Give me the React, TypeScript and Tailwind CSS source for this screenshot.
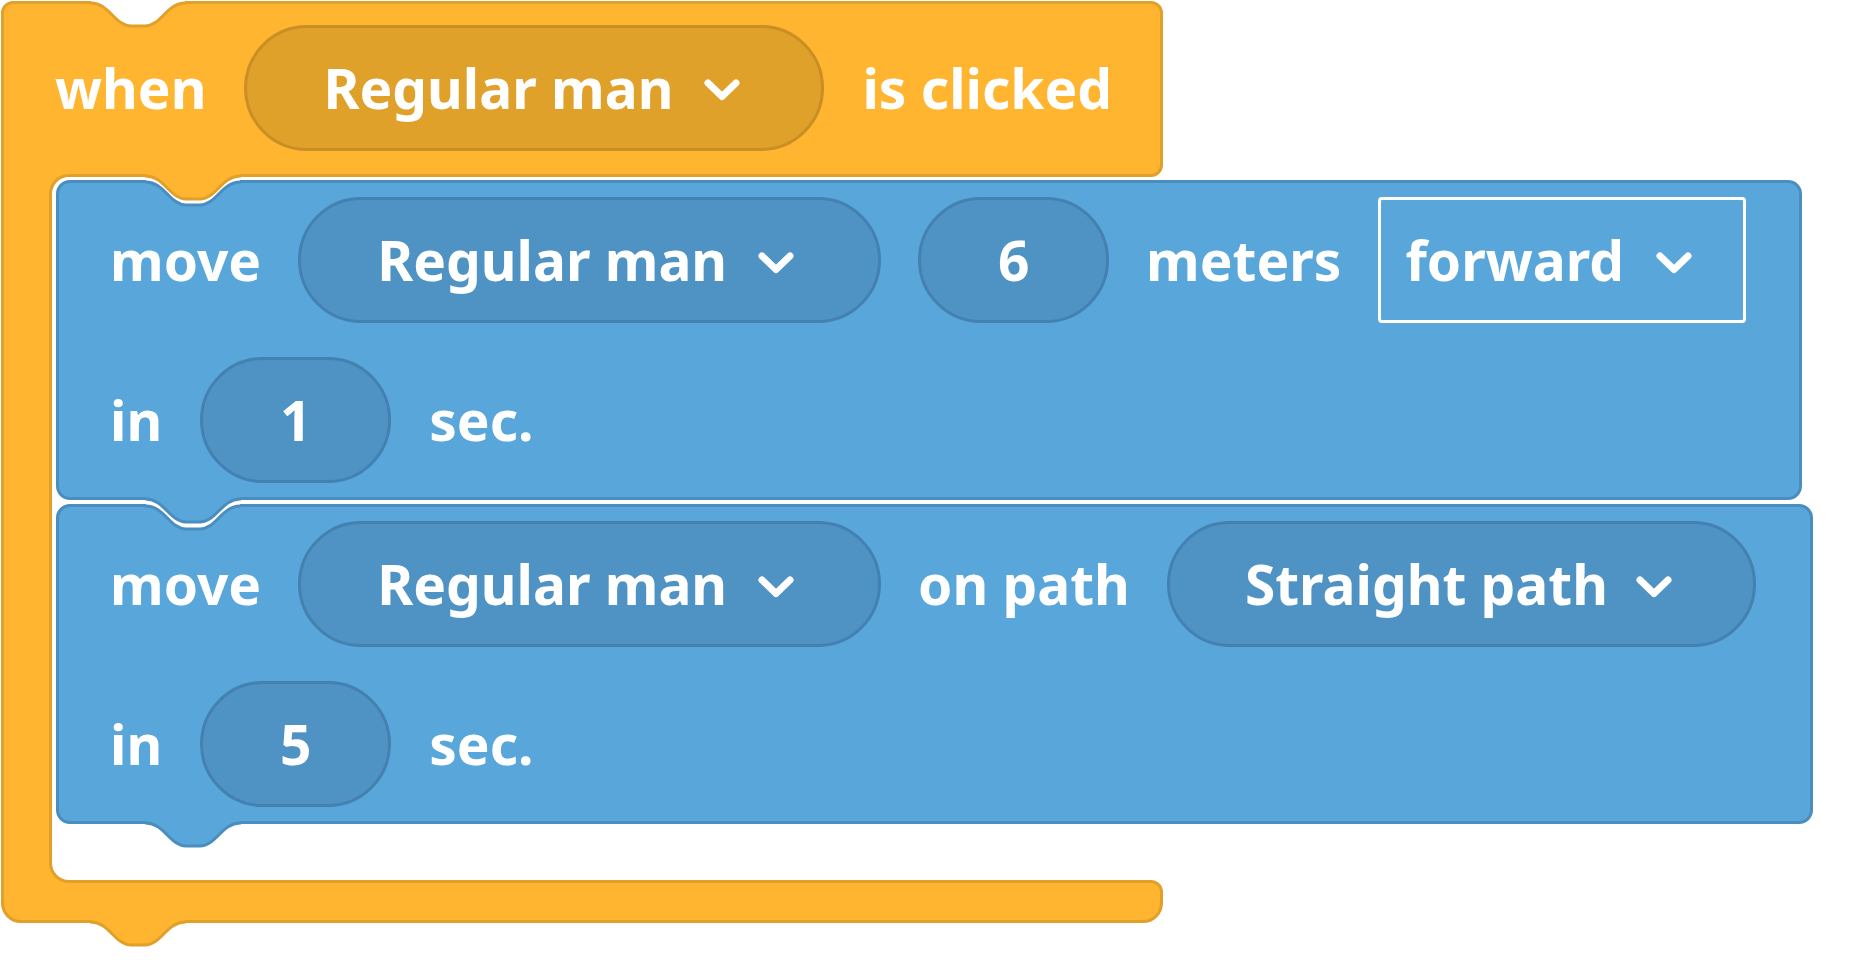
import React from "react";

// ====================================
// SHAPES
// ====================================

// scratch-style connector curve, 94px wide, ~23px deep
const NOTCH = "c18,0 24,23 40,23 h14 c16,0 22,-23 40,-23";

type NotchProps = {
  className: string;
  fill: string;
  stroke: string;
};

function Notch({ className, fill, stroke }: NotchProps) {
  return (
    <svg
      className={"pointer-events-none absolute " + className}
      width="98"
      height="30"
      viewBox="-2 -3 98 30"
    >
      <path d={`M0,-3 V0 ${NOTCH} V-3 Z`} fill={fill} />
      <path
        d={`M-1,0 H0 ${NOTCH} H95`}
        fill="none"
        stroke={stroke}
        strokeWidth="3"
      />
    </svg>
  );
}

function Chevron() {
  return (
    <svg
      width="38"
      height="24"
      viewBox="0 0 38 24"
      className="mt-[5px] shrink-0"
    >
      <path
        d="M5 5 L19 18.5 L33 5"
        fill="none"
        stroke="white"
        strokeWidth="7"
        strokeLinecap="round"
        strokeLinejoin="round"
      />
    </svg>
  );
}

// ====================================
// FIELDS
// ====================================

const TEXT = "whitespace-nowrap text-[55px] leading-[78px] text-white";

function Label({ children }: { children: React.ReactNode }) {
  return <span className={TEXT}>{children}</span>;
}

function YellowDropdown({ label }: { label: string }) {
  return (
    <div className="flex h-[126px] shrink-0 items-center gap-[30px] rounded-full border-[3px] border-[#C98E24] bg-[#E0A12B] pl-[76px] pr-[80px]">
      <span className={TEXT}>{label}</span>
      <Chevron />
    </div>
  );
}

function BlueDropdown({ label, tight }: { label: string; tight?: boolean }) {
  return (
    <div
      className={
        tight
          ? "flex h-[126px] shrink-0 items-center gap-[27px] rounded-full border-[3px] border-[#4381B1] bg-[#4F93C4] pl-[75px] pr-[80px]"
          : "flex h-[126px] shrink-0 items-center gap-[30px] rounded-full border-[3px] border-[#4381B1] bg-[#4F93C4] pl-[76px] pr-[83px]"
      }
    >
      <span className={TEXT}>{label}</span>
      <Chevron />
    </div>
  );
}

function NumberField({ value }: { value: string }) {
  return (
    <div className="flex h-[126px] w-[191px] shrink-0 items-center justify-center rounded-full border-[3px] border-[#4381B1] bg-[#4F93C4]">
      <span className={TEXT}>{value}</span>
    </div>
  );
}

function BoxDropdown({ label }: { label: string }) {
  return (
    <div className="flex h-[126px] w-[368px] shrink-0 items-center gap-[31px] rounded-[4px] border-[3px] border-white pl-[24px]">
      <span className={TEXT}>{label}</span>
      <Chevron />
    </div>
  );
}

// ====================================
// BLOCKS
// ====================================

type MoveBlockProps = {
  width: string;
  firstRow: React.ReactNode;
  seconds: string;
};

function MoveBlock({ width, firstRow, seconds }: MoveBlockProps) {
  return (
    <div
      className={
        "relative flex h-[320px] shrink-0 flex-col justify-between rounded-[14px] border-[3px] border-[#4A8DBF] bg-[#58A6DA] py-[14px] pl-[51px] " +
        width
      }
    >
      {/* notch cut into the top edge */}
      <Notch
        className="left-[85px] top-[-4.5px] z-10"
        fill="#ffffff"
        stroke="#4A8DBF"
      />

      <div className="flex h-[126px] items-center gap-[37px]">{firstRow}</div>

      <div className="flex h-[126px] items-center gap-[38px]">
        <Label>in</Label>
        <NumberField value={seconds} />
        <Label>sec.</Label>
      </div>

      {/* tab hanging below the bottom edge */}
      <Notch
        className="bottom-[-28.5px] left-[85px] z-20"
        fill="#58A6DA"
        stroke="#4A8DBF"
      />
    </div>
  );
}

// ====================================
// PAGE
// ====================================

export default function App() {
  return (
    <div className="min-h-screen w-full bg-white pl-[1px] pt-[1px] font-['Noto_Sans',sans-serif] font-bold">
      <div className="w-[1162px]">
        {/* HAT: when ... is clicked */}
        <div className="relative flex h-[176px] items-center gap-[38px] rounded-[12px] rounded-bl-none border-[3px] border-[#E0A02A] bg-[#FFB52F] pb-[3px] pl-[51px]">
          <Notch
            className="left-[85px] top-[-4.5px] z-10"
            fill="#ffffff"
            stroke="#E0A02A"
          />
          <Label>when</Label>
          <YellowDropdown label="Regular man" />
          <Label>is clicked</Label>
        </div>

        {/* C MOUTH */}
        <div className="relative z-10 flex">
          <div className="relative z-10 -my-[3px] w-[48px] shrink-0 border-l-[3px] border-[#E0A02A] bg-[#FFB52F]" />
          <div className="relative mr-[12px] min-w-0 flex-1">
            <span className="absolute -top-[3px] left-0 h-6 w-6 bg-[#FFB52F]" />
            <span className="absolute -bottom-[3px] left-0 h-6 w-6 bg-[#FFB52F]" />
            <div className="relative z-10 -my-[3px] rounded-l-[20px] border-[3px] border-r-0 border-[#E0A02A] bg-white pb-[56px] pl-[4px] pt-[3px]">
              {/* tab of the hat hanging into the first block */}
              <Notch
                className="left-[92px] top-[-4.5px] z-20"
                fill="#FFB52F"
                stroke="#E0A02A"
              />

              <div className="flex flex-col items-start gap-[4px]">
                <MoveBlock
                  width="w-[1746px]"
                  seconds="1"
                  firstRow={
                    <>
                      <Label>move</Label>
                      <BlueDropdown label="Regular man" />
                      <NumberField value="6" />
                      <Label>meters</Label>
                      <BoxDropdown label="forward" />
                    </>
                  }
                />
                <MoveBlock
                  width="w-[1757px]"
                  seconds="5"
                  firstRow={
                    <>
                      <Label>move</Label>
                      <BlueDropdown label="Regular man" />
                      <Label>on path</Label>
                      <BlueDropdown label="Straight path" tight />
                    </>
                  }
                />
              </div>
            </div>
          </div>
        </div>

        {/* BOTTOM BAR */}
        <div className="relative h-[43px] rounded-[20px] rounded-tl-none rounded-tr-[12px] border-[3px] border-[#E0A02A] bg-[#FFB52F]">
          <Notch
            className="bottom-[-28.5px] left-[85px] z-10"
            fill="#FFB52F"
            stroke="#E0A02A"
          />
        </div>
      </div>
    </div>
  );
}
